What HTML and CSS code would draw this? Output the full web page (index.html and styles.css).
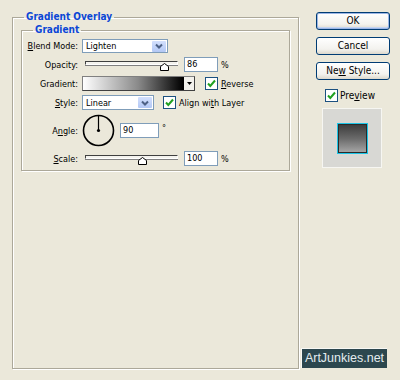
FILE: index.html
```html
<!DOCTYPE html>
<html lang="en">
<head>
  <meta charset="UTF-8">
  <title>Layer Style - Gradient Overlay</title>
  <link rel="stylesheet" href="styles.css">
</head>
<body>
  <div class="dialog">
    <fieldset class="group outer">
      <legend>Gradient Overlay</legend>
      <fieldset class="group inner">
        <legend>Gradient</legend>
        <div class="rows">
          <div class="row">
            <span class="lbl"><u>B</u>lend Mode:</span>
            <div class="select blend">
              <span class="value">Lighten</span>
              <span class="drop"><svg width="14" height="12" viewBox="0 0 14 12"><path d="M4 4.5 L7 7.5 L10 4.5" fill="none" stroke="#4d6185" stroke-width="2"/></svg></span>
            </div>
          </div>

          <div class="row">
            <span class="lbl">Opacity:</span>
            <div class="slider">
              <div class="track"></div>
              <svg class="thumb opacity-thumb" width="9" height="8" viewBox="0 0 9 8"><polygon points="0.5,7.5 0.5,3.5 4.5,0.5 8.5,3.5 8.5,7.5" fill="#fff" stroke="#000"/></svg>
            </div>
            <div class="field num">86</div>
            <span class="unit">%</span>
          </div>

          <div class="row">
            <span class="lbl">Gradient:</span>
            <div class="gradient">
              <div class="ramp"></div>
              <div class="ramp-btn"><svg width="9" height="13" viewBox="0 0 9 13"><path d="M2 5 L7 5 L4.5 8 Z" fill="#000"/></svg></div>
            </div>
            <svg class="check reverse-check" width="13" height="13" viewBox="0 0 13 13"><rect x="0.5" y="0.5" width="12" height="12" fill="#fff" stroke="#1c5180"/><path d="M3 6.5 L5.3 9 L10 3.5" fill="none" stroke="#21a121" stroke-width="2"/></svg>
            <span class="opt"><u>R</u>everse</span>
          </div>

          <div class="row">
            <span class="lbl"><u>S</u>tyle:</span>
            <div class="select style">
              <span class="value">Linear</span>
              <span class="drop"><svg width="14" height="12" viewBox="0 0 14 12"><path d="M4 4.5 L7 7.5 L10 4.5" fill="none" stroke="#4d6185" stroke-width="2"/></svg></span>
            </div>
            <svg class="check align-check" width="13" height="13" viewBox="0 0 13 13"><rect x="0.5" y="0.5" width="12" height="12" fill="#fff" stroke="#1c5180"/><path d="M3 6.5 L5.3 9 L10 3.5" fill="none" stroke="#21a121" stroke-width="2"/></svg>
            <span class="opt">Align wi<u>t</u>h Layer</span>
          </div>

          <div class="row angle-row">
            <span class="lbl">A<u>n</u>gle:</span>
            <svg class="dial" width="33" height="33" viewBox="0 0 33 33">
              <circle cx="16.5" cy="16.5" r="15" fill="none" stroke="#000" stroke-width="1.6"/>
              <line x1="16.5" y1="16.5" x2="16.5" y2="2" stroke="#000" stroke-width="1.2"/>
              <circle cx="16.5" cy="16.5" r="1.6" fill="#000"/>
            </svg>
            <div class="field angle">90</div>
            <span class="deg">°</span>
          </div>

          <div class="row">
            <span class="lbl"><u>S</u>cale:</span>
            <div class="slider">
              <div class="track"></div>
              <svg class="thumb scale-thumb" width="9" height="8" viewBox="0 0 9 8"><polygon points="0.5,7.5 0.5,3.5 4.5,0.5 8.5,3.5 8.5,7.5" fill="#fff" stroke="#000"/></svg>
            </div>
            <div class="field num">100</div>
            <span class="unit">%</span>
          </div>
        </div>
      </fieldset>
    </fieldset>

    <div class="side">
      <div class="btn default">OK</div>
      <div class="btn">Cancel</div>
      <div class="btn">Ne<u>w</u> Style...</div>
      <div class="preview-check">
        <svg width="13" height="13" viewBox="0 0 13 13"><rect x="0.5" y="0.5" width="12" height="12" fill="#fff" stroke="#1c5180"/><path d="M3 6.5 L5.3 9 L10 3.5" fill="none" stroke="#21a121" stroke-width="2"/></svg>
        <span>Pre<u>v</u>iew</span>
      </div>
      <div class="preview">
        <div class="swatch"></div>
      </div>
    </div>
  </div>

  <div class="watermark">ArtJunkies.net</div>
</body>
</html>
```

FILE: styles.css
```css
html, body {
  margin: 0;
  padding: 0;
  height: 100%;
  overflow: hidden;
}

body {
  background-color: #ebe8da;
  font-family: "DejaVu Sans Condensed", "DejaVu Sans", sans-serif;
  font-stretch: condensed;
  font-size: 9px;
  color: #000;
  position: relative;
}

u {
  text-decoration: underline;
  text-underline-offset: 1px;
}

.dialog {
  display: flex;
  padding: 11px 0 0 12px;
}

/* etched group boxes */
.group {
  margin: 0;
  border: 1px solid #aca899;
  box-shadow: inset 1px 1px #fff, 1px 1px #fff;
  box-sizing: border-box;
  min-width: 0;
}

.group legend {
  color: #0a46d5;
  font-weight: bold;
  font-size: 10px;
  line-height: 12px;
  padding: 0 2px;
}

.outer {
  width: 287px;
  height: 358px;
  padding: 1px 8px 0 8px;
}

.outer > legend {
  margin-left: 3px;
}

.inner {
  padding: 3px 0 4px 0;
}

.inner > legend {
  margin-left: 11px;
}

.rows {
  display: flex;
  flex-direction: column;
  gap: 4px;
}

.row {
  display: flex;
  align-items: center;
  height: 15px;
}

.row:first-child {
  height: 14px;
}

.angle-row {
  height: 33px;
}

.lbl {
  width: 56px;
  text-align: right;
  margin-right: 4px;
  flex: none;
}

/* dropdowns */
.select {
  display: flex;
  align-items: center;
  box-sizing: border-box;
  height: 15px;
  background: #fff;
  border: 1px solid #7f9db9;
  padding: 0 1px 0 3px;
}

.select.blend {
  width: 86px;
  height: 14px;
}

.select.style {
  width: 72px;
}

.select .value {
  flex: 1;
}

.drop {
  display: flex;
  align-items: center;
  justify-content: center;
  width: 14px;
  height: 11px;
  background: linear-gradient(#d3e0fd, #b3c8f5);
  border-radius: 1px;
}

/* sliders */
.slider {
  position: relative;
  width: 93px;
  height: 15px;
  margin-left: 3px;
}

.track {
  margin-top: 4px;
  height: 2px;
  background: #f4f3ee;
  border: 1px solid #000;
  border-color: #404040 #fff #fff #404040;
  box-shadow: 0 1px #808080;
}

.thumb {
  position: absolute;
  top: 6px;
}

.opacity-thumb {
  left: 75px;
}

.scale-thumb {
  left: 53px;
}

/* text fields */
.field {
  box-sizing: border-box;
  height: 15px;
  line-height: 13px;
  background: #fff;
  border: 1px solid #7f9db9;
  padding-left: 2px;
}

.field.num {
  width: 34px;
  margin-left: 6px;
}

.field.angle {
  width: 39px;
  margin-left: 5px;
}

.unit {
  margin-left: 3px;
}

.deg {
  align-self: flex-start;
  margin: 9px 0 0 3px;
}

/* gradient picker */
.gradient {
  display: flex;
  box-sizing: border-box;
  width: 113px;
  height: 15px;
  border: 1px solid #000;
  border-color: #808080 #404040 #404040 #808080;
}

.ramp {
  flex: 1;
  background: linear-gradient(to right, #fff, #8a8a8a 55%, #000);
  border-right: 1px solid #000;
}

.ramp-btn {
  width: 10px;
  display: flex;
  align-items: center;
  justify-content: center;
  background: #f2f1ec;
}

.check {
  flex: none;
  margin-right: 3px;
}

.reverse-check {
  margin-left: 10px;
}

.align-check {
  margin-left: 9px;
}

.dial {
  flex: none;
}

/* right hand buttons */
.side {
  margin: 1px 0 0 17px;
  width: 74px;
  display: flex;
  flex-direction: column;
}

.btn {
  box-sizing: border-box;
  height: 18px;
  margin-bottom: 7px;
  border: 1px solid #003c74;
  border-radius: 3px;
  background: linear-gradient(#fff, #f3f2ee 70%, #dcd8cc);
  text-align: center;
  line-height: 16px;
  font-size: 10px;
}

.btn.default {
  box-shadow: inset 0 0 0 1px #9cb6e6, inset 0 -1px 0 1px #c2d3f2;
}

.preview-check {
  display: flex;
  align-items: center;
  gap: 2px;
  padding: 2px 0 0 9px;
  font-size: 10px;
}

.preview {
  width: 60px;
  height: 60px;
  margin: 6px 0 0 6px;
  box-sizing: border-box;
  background: #d8d8d4;
  border: 1px solid #f6f6f2;
  display: flex;
  align-items: center;
  justify-content: center;
}

.swatch {
  width: 31px;
  height: 31px;
  box-sizing: border-box;
  border: 1px solid #1ac4e6;
  background: linear-gradient(#3a3a3a, #6a6a6a 50%, #a9a9a9);
  box-shadow: inset 0 0 0 1px #2a2a2a;
}

.watermark {
  position: absolute;
  right: 13px;
  bottom: 12px;
  width: 86px;
  height: 20px;
  box-sizing: border-box;
  background: #2c474e;
  border-top: 1px solid #f8f8f4;
  border-left: 1px solid #f8f8f4;
  color: #e4ecee;
  font-family: "Liberation Sans", Arial, sans-serif;
  font-stretch: normal;
  font-size: 12.5px;
  line-height: 19px;
  text-align: center;
}
```
